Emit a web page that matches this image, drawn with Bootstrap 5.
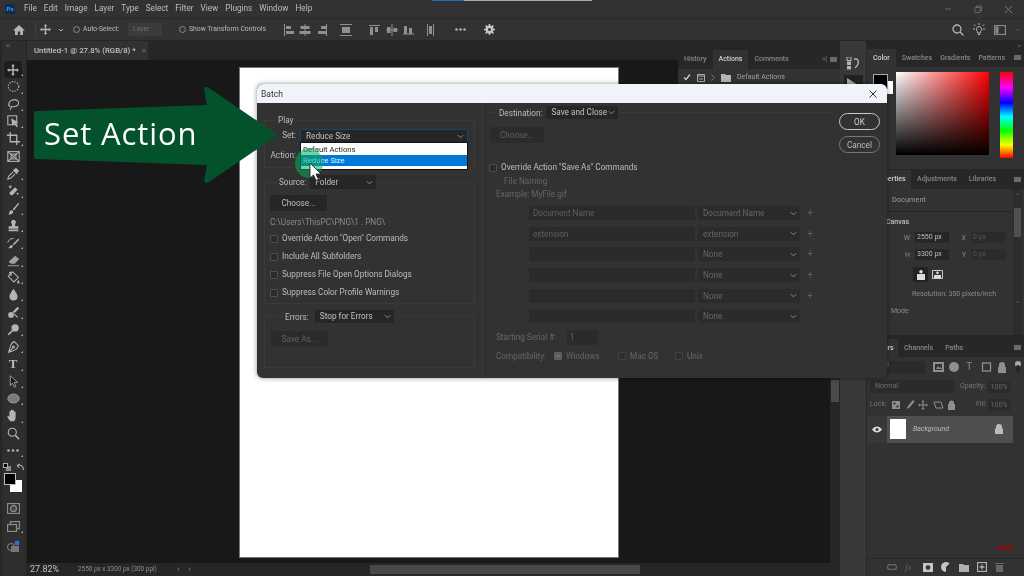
<!DOCTYPE html>
<html lang="en">
<head>
<meta charset="UTF-8">
<title>Batch - Photoshop</title>
<link href="https://cdn.jsdelivr.net/npm/bootstrap@5.3.0/dist/css/bootstrap.min.css" rel="stylesheet">
<style>
  html, body { margin: 0; background: #323232; overflow: hidden; }
  body { font-family: Roboto, "Liberation Sans", sans-serif; font-size: 8.2px; line-height: 1.2; color: #bcbcbc; white-space: nowrap; }
  svg { display: block; flex: none; }
  .ps-app { position: relative; width: 1024px; height: 576px; overflow: hidden; background: #323232; filter: blur(.35px); }
  .ico { fill: #b4b4b4; stroke: none; }
  .ico-line { fill: none; stroke: #b4b4b4; stroke-width: 1.3; }

  /* top bars */
  .menu-row { position: relative; height: 19px; padding-left: 5px; border-bottom: 1px solid #2a2a2a; }
  .load-bar { position: absolute; top: 0; left: 432px; width: 160px; height: 1px; background: linear-gradient(90deg, #1a6fc0 20%, #a8a8a8 20%); }
  .ps-logo { width: 10px; height: 10px; margin-right: 9px; background: #0f2c55; color: #3aa3f5; font: 700 6px/10px Roboto, sans-serif; text-align: center; }
  .menu-words { gap: 7px; }
  .menu-word { font-size: 8.2px; color: #bdbdbd; }
  .win-btns { margin-left: auto; gap: 22px; padding-right: 11px; }
  .option-row { height: 22px; border-bottom: 1px solid #262626; font-size: 6.8px; }
  .opt-sep { width: 1px; height: 16px; background: #3e3e3e; }
  .opt-check { width: 7px; height: 7px; border: 1px solid #8a8a8a; border-radius: 50%; }
  .opt-select { width: 34px; height: 13px; background: #3b3b3b; color: #6c6c6c; padding: 2px 5px; line-height: 9px; }

  /* work area */
  .work-row { height: 535px; }
  .tool-col { width: 27px; background: #2e2e2e; border-left: 2px solid #262626; border-right: 1px solid #242424; }
  .tool-head { height: 20px; color: #8a8a8a; font-size: 7px; padding: 1px 0 0 4px; }
  .tool-btn { position: relative; height: 17.32px; width: 18px; margin-left: 2px; }
  .tool-btn.is-on { background: #1d1d1d; border-radius: 2px; }
  .tool-btn.has-fly::after { content: ""; position: absolute; right: -1px; bottom: 2px; border-left: 2px solid transparent; border-bottom: 2px solid #b4b4b4; }
  .tool-t { font: 700 13px/1 "Liberation Serif", serif; color: #b8b8b8; }
  .swatch-box { position: relative; height: 39px; }
  .swatch-fg, .swatch-bg { position: absolute; width: 12px; height: 12px; }
  .swatch-fg { left: 2px; top: 14px; background: #000; border: 1px solid #bbb; z-index: 1; }
  .swatch-bg { left: 8px; top: 21px; background: #fff; }
  .swatch-mini-a, .swatch-mini-b { position: absolute; width: 5px; height: 5px; }
  .swatch-mini-a { left: 1px; top: 4px; background: #000; border: 1px solid #aaa; z-index: 1; }
  .swatch-mini-b { left: 4px; top: 7px; background: #888; }
  .swap-ico { position: absolute; left: 14px; top: 4px; }

  .doc-col { width: 813px; }
  .doc-tabs { height: 19px; background: #262626; }
  .doc-tab { width: 121px; background: #323232; padding-left: 7px; color: #c0c0c0; font-size: 7.8px; font-weight: 500; gap: 6px; }
  .doc-mid { height: 503px; }
  .doc-canvas { width: 803px; padding-top: 2px; background: #181818; }
  .doc-page { width: 378px; height: 489px; background: #fff; outline: 1px solid #777; }
  .doc-vbar { width: 10px; background: #262626; padding: 320px 1px 0; }
  .doc-vthumb { height: 22px; background: #4a4a4a; }
  .doc-status { height: 13px; background: #262626; padding-left: 3px; }
  .status-zoom { width: 48px; font-size: 9px; color: #c0c0c0; }
  .status-size { width: 99px; color: #8f8f8f; font-size: 6.4px; }
  .status-arrows { width: 193px; gap: 9px; color: #888; }
  .status-thumb { width: 270px; height: 9px; background: #484848; }

  .icon-strip { width: 27px; background: #383838; border-right: 1px solid #262626; }
  .dock-col { width: 157px; background: #262626; font-size: 7px; }
  .dock-head { height: 8px; color: #8a8a8a; font-size: 6px; text-align: right; padding-right: 3px; line-height: 7px; }
  .pane-tabs { height: 18px; background: #272727; font-size: 7px; }
  .pane-tab { padding: 0 6px; color: #868686; font-weight: 500; }
  .pane-tab.is-on { background: #323232; color: #d0d0d0; }
  .pane-menu { margin-left: auto; margin-right: 3px; width: 7px; height: 5px; background: #6a6a6a; }
  .pane-body { background: #323232; }

  .color-body { height: 103px; margin-bottom: 1px; padding: 5px 0 0 29px; }
  .color-swatch { position: relative; }
  .color-spec { width: 93px; height: 83px; background: linear-gradient(to top, #000, transparent), linear-gradient(to right, #fff, #f00); }
  .color-hue { width: 13px; height: 86px; margin-left: 11px; background: linear-gradient(180deg, #f00, #f0f 18%, #00f 36%, #0ff 52%, #0f0 68%, #ff0 85%, #f00); }
  .color-fg { position: absolute; width: 15px; height: 15px; left: -23px; top: 2px; background: #000; border: 1px solid #aaa; z-index: 1; }
  .color-bg { position: absolute; width: 13px; height: 13px; left: -16px; top: 9px; background: #fff; }

  .prop-body { height: 147px; padding-right: 2px; }
  .prop-sub { height: 23px; padding-top: 2px; border-bottom: 1px solid #262626; padding-left: 25px; color: #9a9a9a; font-size: 7.4px; }
  .prop-main { padding: 6px 0 0 19px; }
  .prop-title { color: #c0c0c0; font-weight: 500; margin-bottom: 6px; }
  .prop-grid { display: grid; grid-template-columns: 13px 34px 12px 35px; column-gap: 5px; row-gap: 6px; align-items: center; margin-left: 11px; color: #8a8a8a; }
  .prop-inp { height: 11px; background: #262626; color: #bcbcbc; padding-left: 2px; line-height: 11px; }
  .prop-inp.is-off { background: #2b2b2b; color: #555; }
  .prop-orient { margin: 7px 0 0 27px; gap: 4px; }
  .orient-btn { width: 15px; height: 15px; background: #222; }
  .prop-res { margin: 8px 0 0 26px; color: #8b8b8b; }
  .prop-mode { margin: 8px 0 0 5px; color: #8b8b8b; }
  .prop-scroll { width: 9px; background: #2c2c2c; color: #777; }
  .prop-thumb { height: 29px; background: #505050; margin: 8px 1px 0; }

  .layer-body { height: 221px; }
  .layer-line { height: 18px; padding: 0 3px; color: #767676; }
  .layer-sel { height: 13px; background: #2b2b2b; color: #6f6f6f; padding-left: 5px; }
  .layer-pct { width: 22px; height: 12px; background: #2b2b2b; color: #666; text-align: center; line-height: 12px; }
  .layer-item { height: 27px; margin-top: 2px; width: 146px; }
  .layer-eye { width: 20px; background: #383838; }
  .layer-cell { background: #4f4f4f; padding-left: 3px; gap: 7px; color: #bcbcbc; font-style: italic; }
  .layer-thumb { width: 16px; height: 20px; background: #fff; }
  .layer-foot { height: 18px; margin-top: auto; border-top: 1px solid #262626; gap: 8px; padding-left: 20px; }

  /* floating actions panel */
  .float-pane { position: absolute; left: 678px; top: 50px; width: 162px; height: 150px; background: #323232; z-index: 1; }
  .float-row { height: 17px; gap: 6px; padding-left: 5px; color: #a0a0a0; font-size: 7px; }
  .strip-play { width: 19px; height: 18px; background: #222; margin: 5px auto 0; padding: 3px 0 0 3px; }

  /* batch dialog */
  .batch-dlg { position: absolute; left: 257px; top: 84px; width: 630px; height: 294px; border-radius: 6px; overflow: hidden; background: #323232; z-index: 3; box-shadow: 0 0 5px rgba(0,0,0,.45); }
  .batch-title { height: 19px; background: #f0f4fa; color: #333; padding: 1px 10px 0 4px; font-size: 8.5px; }
  .batch-close { margin-left: auto; }
  .batch-left { position: relative; width: 226px; border-right: 1px solid #3a3a3a; padding: 11px 7px 0; }
  .batch-right { width: 352px; padding: 3px 5px 0 5px; }
  .batch-btns { padding: 10px 0 0 4px; gap: 6px; width: 46px; }
  .ps-group { border: 1px solid #3a3a3a; }
  .ps-group legend { float: none; width: auto; margin: 0; padding: 0 2px; font-size: 8.2px; line-height: 12px; }
  .group-play { height: 54px; padding-top: 4px; }
  .group-play legend { margin-left: 11px; }
  .group-src { height: 129px; margin-top: 7px; padding: 6px 0 0 5px; }
  .group-src legend { margin-left: 7px; }
  .group-err { height: 58px; margin-top: 6px; padding: 8px 0 0 6px; }
  .group-err legend { margin-left: 12px; gap: 6px; }
  .group-dest { height: 55px; border-width: 1px 0 0; padding: 8px 0 0 2px; }
  .group-dest legend { margin-left: 7px; }
  .ps-field { gap: 5px; height: 12px; }
  .ps-label { width: 32px; text-align: right; }
  .ps-select.form-select { width: auto; height: 13px; min-height: 0; padding: 0 14px 0 5px; font-size: 8.2px; line-height: 13px; color: #c0c0c0; background-color: #262626; border: 0; border-radius: 1px; box-shadow: none; background-size: 7px; background-position: right 3px center; background-image: url("data:image/svg+xml,%3csvg xmlns='http://www.w3.org/2000/svg' viewBox='0 0 16 16'%3e%3cpath fill='none' stroke='%23999' stroke-width='2' d='M2 5l6 6 6-6'/%3e%3c/svg%3e"); font-family: inherit; }
  .group-dest .ps-select.form-select { padding-right: 9px; }
  .set-wrap { position: relative; width: 166px; }
  .set-wrap .form-select { width: 100%; height: 12px; outline: 1px solid #16486f; }
  .set-list { position: absolute; top: 13px; left: 0; width: 100%; height: 26px; background: #fff; z-index: 2; box-shadow: 0 0 0 1px #111; color: #222; font-size: 7.7px; }
  .set-item { height: 12px; line-height: 14px; padding-left: 2px; }
  .set-item.is-on { background: #0078d7; color: #dff; height: 11px; line-height: 12px; }
  .set-glow { position: absolute; left: -6px; top: 18px; width: 28px; height: 30px; border-radius: 50%; background: rgba(10,170,90,.55); z-index: 3; }
  .set-cursor { position: absolute; left: 8px; top: 33px; z-index: 4; }
  .ps-btn.btn { height: 16px; width: 57px; padding: 0; font-size: 8.2px; line-height: 16px; background: #262626; color: #bcbcbc; border: 0; border-radius: 1px; }
  .ps-btn.btn:disabled { background: #2b2b2b; color: #606060; opacity: 1; }
  .ps-path { color: #8a8a8a; margin: 6px 0 2px; line-height: 11px; height: 11px; }
  .ps-check { height: 18px; gap: 4px; }
  .ps-check .form-check-input { width: 8px; height: 8px; margin: 0; background-color: #2b2b2b; border: 1px solid #505050; border-radius: 1px; flex: none; }
  .ps-check .form-check-input:checked { background-color: #8a8a8a; border-color: #8a8a8a; }
  .ok-btn.btn { height: 17px; width: 41px; padding: 0; font-size: 8.2px; line-height: 14px; color: #d0d0d0; background: transparent; border: 1px solid #c8c8c8; border-radius: 9px; }
  .cancel-btn.btn { border-color: #777; color: #bcbcbc; }
  .off-text { color: #666; }
  .name-grid { display: grid; grid-template-columns: 166px 102px 14px; column-gap: 3px; row-gap: 6.7px; margin: 4px 0 0 41px; }
  .name-inp { height: 14px; background: #2b2b2b; color: #5f5f5f; padding-left: 4px; line-height: 14px; }
  .name-grid .form-select { width: 100%; height: 14px; background-color: #2b2b2b; color: #666; line-height: 14px; }
  .name-plus { color: #5e5e5e; font-size: 10px; line-height: 14px; text-align: center; }
  .serial-box { width: 31px; height: 15px; background: #2b2b2b; color: #5f5f5f; padding-left: 3px; line-height: 15px; }

  /* green callout */
  .call-arrow { position: absolute; left: 33px; top: 85px; z-index: 5; }
  .call-text { position: absolute; left: 44px; top: 113px; z-index: 6; color: #fff; font: 400 31px/40px "Open Sans", sans-serif; letter-spacing: .9px; }
</style>
</head>
<body>
<div class="ps-app d-flex flex-column">

  <div class="menu-row d-flex align-items-center">
    <div class="load-bar"></div>
    <div class="ps-logo">Ps</div>
    <div class="menu-words d-flex">
      <span class="menu-word">File</span><span class="menu-word">Edit</span><span class="menu-word">Image</span><span class="menu-word">Layer</span><span class="menu-word">Type</span><span class="menu-word">Select</span><span class="menu-word">Filter</span><span class="menu-word">View</span><span class="menu-word">Plugins</span><span class="menu-word">Window</span><span class="menu-word">Help</span>
    </div>
    <div class="win-btns d-flex align-items-center">
      <svg width="8" height="8" viewBox="0 0 8 8"><path d="M1 4h6" stroke="#666" fill="none"/></svg>
      <svg width="8" height="8" viewBox="0 0 8 8"><path d="M1 2.500h5v5H1zM2.500 2.500V1h5v5H6" stroke="#666" fill="none"/></svg>
      <svg width="9" height="9" viewBox="0 0 9 9"><path d="M1 1l7 7M8 1l-7 7" stroke="#777" fill="none"/></svg>
    </div>
  </div>

  <div class="option-row d-flex align-items-center">
    <svg class="ico" style="margin-left:13px" width="12" height="12" viewBox="0 0 12 12"><path d="M6 1l6 5.500h-2V11H7.200V7.500H4.800V11H2V6.500H0z"/></svg>
    <div class="opt-sep" style="margin-left:10px"></div>
    <svg class="ico" style="margin-left:4px" width="11" height="11" viewBox="0 0 16 16"><path d="M8 0l2.500 3H9v4h4V5.500L16 8l-3 2.500V9H9v4h1.500L8 16l-2.500-3H7V9H3v1.500L0 8l3-2.500V7h4V3H5.500z"/></svg>
    <svg class="ico-line" style="margin-left:7px" width="6" height="6" viewBox="0 0 6 6"><path d="M1 2l2 2 2-2" stroke-width="1"/></svg>
    <div class="opt-check" style="margin-left:9px"></div>
    <span style="margin-left:3px;width:45px">Auto-Select:</span>
    <div class="opt-select" style="margin-right:17px">Layer</div>
    <div class="opt-check"></div>
    <span style="margin-left:3px;width:85px">Show Transform Controls</span>
    <svg class="ico" style="margin-left:10px;fill:#909090" width="150" height="12" viewBox="0 0 150 12">
      <path d="M0 0h1v12H0zM2 2h5v3H2zM2 7h8v3H2z"/>
      <path d="M20.500 0h1v2h4v3h-4v2h5v3h-5v2h-1v-2h-5V7h5V5h-4V2h4z"/>
      <path d="M37 2h5v3h-5zM34 7h8v3h-8zM42 0h1v12h-1z"/>
      <path d="M56 0h12v1H56zM56 11h12v1H56zM58 3h8v6h-8z"/>
      <path d="M85 1h11v1H85zM86 3h3v8h-3zM91 3h3v5h-3z"/>
      <path d="M107.500 0h1v12h-1zM103 3h3.500v6H103zM109.500 4h3.500v4h-3.500zM102 5.500h12v1h-12z"/>
      <path d="M119 9.500h11v1h-11zM120 2h3v8h-3zM125 4h3v6h-3z"/>
      <path d="M143 0h1v12h-1zM149 0h1v12h-1zM145 2h3v8h-3z"/>
    </svg>
    <svg class="ico" style="margin-left:21px" width="11" height="3" viewBox="0 0 11 3"><circle cx="1.500" cy="1.500" r="1.300"/><circle cx="5.500" cy="1.500" r="1.300"/><circle cx="9.500" cy="1.500" r="1.300"/></svg>
    <svg style="margin-left:18px" width="11" height="11" viewBox="0 0 16 16"><circle cx="8" cy="8" r="4" fill="none" stroke="#c8c8c8" stroke-width="3.500"/><path d="M8 0v3M8 13v3M0 8h3M13 8h3M2.300 2.300l2 2M11.700 11.700l2 2M2.300 13.700l2-2M11.700 4.300l2-2" stroke="#c8c8c8" stroke-width="2.200"/></svg>
    <div class="d-flex align-items-center ms-auto" style="gap:9px;padding-right:3px">
      <svg class="ico-line" width="12" height="12" viewBox="0 0 12 12"><circle cx="5" cy="5" r="4"/><path d="M8 8l3.500 3.500"/></svg>
      <svg class="ico-line" width="12" height="13" viewBox="0 0 12 13"><path d="M6 3.500a2.800 2.800 0 0 1 1.500 5v1.500h-3V8.500A2.800 2.800 0 0 1 6 3.500zM4.800 11.500h2.400M6 0v2M1 1.500l1.500 1.500M11 1.500L9.500 3M0 6h2M10 6h2" stroke-width="1"/></svg>
      <svg class="ico-line" width="12" height="10" viewBox="0 0 12 10"><rect x=".5" y=".5" width="11" height="9" stroke="#888"/><rect x="1.500" y="1.500" width="3" height="7" fill="#888" stroke="none"/></svg>
      <svg class="ico-line" width="6" height="6" viewBox="0 0 6 6"><path d="M1 2l2 2 2-2" stroke="#555" stroke-width="1"/></svg>
    </div>
  </div>

  <div class="work-row d-flex">
    <div class="tool-col">
      <div class="tool-head">‹‹</div>
      <div class="tool-btn is-on has-fly d-flex align-items-center justify-content-center"><svg class="ico" width="12" height="12" viewBox="0 0 16 16"><path d="M8 0l2.500 3H9v4h4V5.500L16 8l-3 2.500V9H9v4h1.500L8 16l-2.500-3H7V9H3v1.500L0 8l3-2.500V7h4V3H5.500z"/></svg></div>
      <div class="tool-btn has-fly d-flex align-items-center justify-content-center"><svg class="ico-line" width="13" height="13" viewBox="0 0 16 16"><ellipse cx="8" cy="8" rx="6.500" ry="6" stroke-dasharray="1.800 1.500"/></svg></div>
      <div class="tool-btn has-fly d-flex align-items-center justify-content-center"><svg class="ico-line" width="13" height="13" viewBox="0 0 16 16"><path d="M3.500 11C0 7 4 2 9 2s6.500 4 4.500 6.500S7 11 4.500 10.500M5 10c1 2 0 3-1.500 4.500"/></svg></div>
      <div class="tool-btn has-fly d-flex align-items-center justify-content-center"><svg class="ico-line" width="13" height="13" viewBox="0 0 16 16"><rect x="1" y="1" width="11" height="11"/><path class="ico" d="M5 4l9 5-3.500 1 3 4-1.500 1-3-4L6.500 13z" stroke="none"/></svg></div>
      <div class="tool-btn has-fly d-flex align-items-center justify-content-center"><svg class="ico-line" width="13" height="13" viewBox="0 0 16 16"><path d="M4 0v12h12M0 4h12v12" stroke-width="1.600"/></svg></div>
      <div class="tool-btn d-flex align-items-center justify-content-center"><svg class="ico-line" width="13" height="13" viewBox="0 0 16 16"><rect x="1" y="2" width="14" height="12"/><path d="M1 2l14 12M15 2L1 14"/><rect x="5" y="5" width="6" height="6"/></svg></div>
      <div class="tool-btn has-fly d-flex align-items-center justify-content-center"><svg class="ico" width="13" height="13" viewBox="0 0 16 16"><path d="M11 1l4 4-2.500 2.500L13 8l-1 1-5-5 1-1 .5.500z"/><path d="M7.500 6L2 11.500 1 15l3.500-1L10 8.500" fill="none" stroke="#b4b4b4" stroke-width="1.300"/></svg></div>
      <div class="tool-btn has-fly d-flex align-items-center justify-content-center"><svg class="ico" width="13" height="13" viewBox="0 0 16 16"><path d="M10 4l3 3-6 6.500c-1.500 1.500-5-2-3.500-3.500z"/><path d="M4 1l.8 1.700L6.500 3.500 4.800 4.300 4 6l-.8-1.700L1.500 3.500l1.700-.8zM13 10l.6 1.400 1.400.6-1.400.6L13 14l-.6-1.400L11 12l1.400-.6z"/></svg></div>
      <div class="tool-btn has-fly d-flex align-items-center justify-content-center"><svg class="ico" width="13" height="13" viewBox="0 0 16 16"><path d="M14 1L7 9l1.500 1.500L15 2z"/><path d="M6 10c-2 0-3 1-3 2.500S2 15 1 15c3 1 7 0 6.500-3.500z"/></svg></div>
      <div class="tool-btn has-fly d-flex align-items-center justify-content-center"><svg class="ico" width="13" height="13" viewBox="0 0 16 16"><path d="M8 1a3 3 0 0 1 2 5.200V9h4v3H2V9h4V6.200A3 3 0 0 1 8 1zM2 13h12v2H2z"/></svg></div>
      <div class="tool-btn has-fly d-flex align-items-center justify-content-center"><svg class="ico" width="13" height="13" viewBox="0 0 16 16"><path d="M14 3L7 10l1.500 1.500L15 4.500zM6 11c-2 0-2 1-2.500 2S2 14.500 1 14.500C4 16 7.500 15 7 12z"/><path d="M1 8c1-3 3-5 7-5" fill="none" stroke="#b4b4b4" stroke-width="1.200"/></svg></div>
      <div class="tool-btn has-fly d-flex align-items-center justify-content-center"><svg class="ico" width="13" height="13" viewBox="0 0 16 16"><path d="M10 2l5 4-5.500 6H5L2 9.500z" opacity=".85"/><path d="M1 14h14v1H1z"/></svg></div>
      <div class="tool-btn has-fly d-flex align-items-center justify-content-center"><svg class="ico-line" width="13" height="13" viewBox="0 0 16 16"><path d="M7 1l7 7-5.500 5.500-7-7zM3 3c0-2 2-2 2-1v4"/><path class="ico" d="M14 11c1 1.500 1.500 2.300 1.500 3a1.500 1.500 0 0 1-3 0c0-.7.500-1.500 1.500-3z" stroke="none"/></svg></div>
      <div class="tool-btn has-fly d-flex align-items-center justify-content-center"><svg class="ico" width="13" height="13" viewBox="0 0 16 16"><path d="M8 1c3 4.500 5 7 5 9.500a5 5 0 0 1-10 0C3 8 5 5.500 8 1z"/></svg></div>
      <div class="tool-btn has-fly d-flex align-items-center justify-content-center"><svg class="ico" width="13" height="13" viewBox="0 0 16 16"><path d="M13 1l2 2-6 6-2-2z"/><circle cx="5" cy="11" r="3.500"/><path d="M9 10l4 4" stroke="#b4b4b4" stroke-width="1.500"/></svg></div>
      <div class="tool-btn has-fly d-flex align-items-center justify-content-center"><svg class="ico" width="13" height="13" viewBox="0 0 16 16"><circle cx="10" cy="6" r="4.500"/><path d="M7 9L1.500 14.500" stroke="#b4b4b4" stroke-width="2"/></svg></div>
      <div class="tool-btn has-fly d-flex align-items-center justify-content-center"><svg class="ico-line" width="13" height="13" viewBox="0 0 16 16"><path d="M9 2l5 5c-1 3-3 5.500-7 6.500L2 15l1.500-5C4.500 6 6 3 9 2zM2 15l5-5"/><circle cx="8" cy="8.500" r="1.200"/></svg></div>
      <div class="tool-btn has-fly d-flex align-items-center justify-content-center"><span class="tool-t">T</span></div>
      <div class="tool-btn has-fly d-flex align-items-center justify-content-center"><svg width="13" height="13" viewBox="0 0 16 16"><path d="M4 1l9 8H8.500l2.500 5-2 1-2.500-5L4 13z" fill="#151515" stroke="#b4b4b4"/></svg></div>
      <div class="tool-btn has-fly d-flex align-items-center justify-content-center"><svg width="13" height="13" viewBox="0 0 16 16"><ellipse cx="8" cy="8" rx="7" ry="5.500" fill="#7a7a7a" stroke="#a8a8a8"/></svg></div>
      <div class="tool-btn has-fly d-flex align-items-center justify-content-center"><svg class="ico" width="13" height="13" viewBox="0 0 16 16"><path d="M4 15c-2-2-3.500-5-3.500-6s1.500-1 2.500 1V3c0-1.300 1.800-1.300 1.800 0v3V1.700c0-1.300 2-1.300 2 0V6V2.300c0-1.300 2-1.300 2 0V7V4c0-1.200 1.800-1.200 1.800 0v6c0 2.500-1 4-2 5z"/></svg></div>
      <div class="tool-btn d-flex align-items-center justify-content-center"><svg class="ico-line" width="13" height="13" viewBox="0 0 16 16"><circle cx="6.500" cy="6.500" r="5"/><path d="M10 10l5 5" stroke-width="1.800"/></svg></div>
      <div class="tool-btn has-fly d-flex align-items-center justify-content-center"><svg class="ico" width="12" height="3" viewBox="0 0 12 3"><circle cx="1.500" cy="1.500" r="1.300"/><circle cx="6" cy="1.500" r="1.300"/><circle cx="10.500" cy="1.500" r="1.300"/></svg></div>
      <div class="swatch-box">
        <div class="swatch-mini-a"></div><div class="swatch-mini-b"></div>
        <svg class="swap-ico ico-line" width="9" height="8" viewBox="0 0 9 8"><path d="M1 3c3-2 6-1 6.500 4M1 3l2.500-2M1 3l2.500 1.500" stroke-width="1.100"/></svg>
        <div class="swatch-fg"></div><div class="swatch-bg"></div>
      </div>
      <div class="tool-btn d-flex align-items-center justify-content-center" style="margin-top:2px"><svg class="ico-line" width="13" height="11" viewBox="0 0 13 11"><rect x=".5" y=".5" width="12" height="10" stroke="#8a8a8a"/><circle cx="6.500" cy="5.500" r="3" stroke="#8a8a8a" fill="#444"/></svg></div>
      <div class="tool-btn has-fly d-flex align-items-center justify-content-center"><svg class="ico-line" width="13" height="11" viewBox="0 0 13 11"><rect x="3.500" y=".5" width="9" height="7" stroke="#8a8a8a"/><rect x=".5" y="3.500" width="9" height="7" fill="#2e2e2e" stroke="#8a8a8a"/></svg></div>
      <div class="tool-btn d-flex align-items-center justify-content-center" style="margin-top:3px"><svg width="15" height="13" viewBox="0 0 15 13"><circle cx="5" cy="7" r="3.500" fill="none" stroke="#888"/><rect x="5" y="6" width="8" height="6" fill="#777"/><circle cx="11" cy="3" r="2.500" fill="#2a6fd0"/></svg></div>
    </div>

    <div class="doc-col d-flex flex-column">
      <div class="doc-tabs d-flex">
        <div class="doc-tab d-flex align-items-center"><span>Untitled-1 @ 27.8% (RGB/8) *</span><span class="off-text">×</span></div>
      </div>
      <div class="doc-mid d-flex">
        <div class="doc-canvas d-flex align-items-center justify-content-center"><div class="doc-page"></div></div>
        <div class="doc-vbar"><div class="doc-vthumb"></div></div>
      </div>
      <div class="doc-status d-flex align-items-center">
        <span class="status-zoom">27.82%</span>
        <span class="status-size">2550 px x 3300 px (300 ppi)</span>
        <span class="status-arrows d-flex"><span>›</span><span>‹</span></span>
        <div class="status-thumb"></div>
      </div>
    </div>

    <div class="icon-strip">
      <svg class="mx-auto" style="margin-top:16px" width="14" height="13" viewBox="0 0 14 13"><rect x="1" y="0" width="4" height="3.500" fill="none" stroke="#b4b4b4"/><rect x="1" y="4.500" width="4" height="3.500" fill="#b4b4b4"/><rect x="1" y="9" width="4" height="3.500" fill="#b4b4b4"/><path d="M8 2h3c2 2 2 6-2 9" fill="none" stroke="#b4b4b4" stroke-width="1.300"/></svg>
      <div class="strip-play"><svg width="11" height="15" viewBox="0 0 11 15"><path d="M0 0l11 7-11 8z" fill="#a8a8a8"/></svg></div>
    </div>

    <div class="dock-col d-flex flex-column">
      <div class="dock-head">››</div>
      <div class="pane-tabs d-flex align-items-stretch">
        <div class="pane-tab is-on d-flex align-items-center">Color</div><div class="pane-tab d-flex align-items-center" style="padding:0 4px 0 6px">Swatches</div><div class="pane-tab d-flex align-items-center" style="padding:0 4px">Gradients</div><div class="pane-tab d-flex align-items-center" style="padding:0 4px">Patterns</div>
        <div class="pane-menu align-self-center"></div>
      </div>
      <div class="pane-body color-body d-flex">
        <div class="color-swatch"><div class="color-fg"></div><div class="color-bg"></div></div>
        <div class="color-spec"></div>
        <div class="color-hue"></div>
      </div>

      <div class="pane-tabs d-flex align-items-stretch" style="height:19px">
        <div class="pane-tab is-on d-flex align-items-center" style="width:44px">Properties</div><div class="pane-tab d-flex align-items-center">Adjustments</div><div class="pane-tab d-flex align-items-center">Libraries</div>
        <div class="pane-menu align-self-center"></div>
      </div>
      <div class="pane-body prop-body d-flex">
        <div class="flex-grow-1">
          <div class="prop-sub d-flex align-items-center">Document</div>
          <div class="prop-main">
            <div class="prop-title">Canvas</div>
            <div class="prop-grid">
              <span class="text-end">W</span><div class="prop-inp">2550 px</div><span class="text-end">X</span><div class="prop-inp is-off">0 px</div>
              <span class="text-end">H</span><div class="prop-inp">3300 px</div><span class="text-end">Y</span><div class="prop-inp is-off">0 px</div>
            </div>
            <div class="prop-orient d-flex align-items-center">
              <div class="orient-btn d-flex align-items-center justify-content-center"><svg width="8" height="10" viewBox="0 0 8 10"><circle cx="4" cy="1.800" r="1.800" fill="#ddd"/><path d="M0 4h8v6H0z" fill="#ddd"/></svg></div>
              <svg width="11" height="9" viewBox="0 0 11 9"><path d="M.5.5h10v8H.5z" fill="#333" stroke="#ccc"/><circle cx="5.500" cy="2.800" r="1.300" fill="#ddd"/><path d="M2 5h7v3H2z" fill="#ddd"/></svg>
            </div>
            <div class="prop-res">Resolution: 300 pixels/inch</div>
            <div class="prop-mode">Mode</div>
          </div>
        </div>
        <div class="prop-scroll">
          <div class="text-center" style="font-size:6px;line-height:8px;margin-top:3px">⌃</div>
          <div class="prop-thumb"></div>
          <div class="text-center" style="font-size:6px;line-height:8px;margin-top:60px">⌄</div>
        </div>
      </div>

      <div style="height:4px"></div>
      <div class="pane-tabs d-flex align-items-stretch">
        <div class="pane-tab is-on d-flex align-items-center" style="width:31px">Layers</div><div class="pane-tab d-flex align-items-center">Channels</div><div class="pane-tab d-flex align-items-center">Paths</div>
        <div class="pane-menu align-self-center"></div>
      </div>
      <div class="pane-body layer-body d-flex flex-column">
        <div class="layer-line d-flex align-items-center" style="height:21px">
          <div class="layer-sel" style="width:56px">Kind</div>
          <svg class="ico" style="margin-left:8px;fill:#8f8f8f" width="11" height="10" viewBox="0 0 11 10"><path d="M0 0h11v10H0zM2 2v6h7V2zM3 7l2-3 1.500 2 1-1L9 7z" fill-rule="evenodd"/></svg>
          <svg class="ico" style="margin-left:5px;fill:#8f8f8f" width="10" height="10" viewBox="0 0 10 10"><circle cx="5" cy="5" r="5"/></svg>
          <span style="margin-left:7px;font-size:10px;color:#8f8f8f;width:10px">T</span>
          <svg class="ico-line" style="margin-left:5px;stroke:#8f8f8f" width="11" height="10" viewBox="0 0 11 10"><rect x="1.500" y="1" width="8" height="8"/></svg>
          <svg class="ico" style="margin-left:5px;fill:#8f8f8f" width="10" height="11" viewBox="0 0 10 11"><path d="M2 5V3a3 3 0 0 1 6 0v2h1v6H1V5z"/></svg>
          <svg style="margin-left:8px" width="6" height="12" viewBox="0 0 6 12"><circle cx="3" cy="3" r="3" fill="#a8a8a8"/><rect x="1" y="4" width="4" height="8" rx="2" fill="#262626"/></svg>
        </div>
        <div class="layer-line d-flex align-items-center">
          <div class="layer-sel d-flex align-items-center" style="width:84px">Normal</div>
          <span style="margin-left:6px;width:28px">Opacity:</span>
          <div class="layer-pct">100%</div>
        </div>
        <div class="layer-line d-flex align-items-center">
          <span style="width:22px">Lock:</span>
          <svg width="68" height="10" viewBox="0 0 68 10" fill="#8f8f8f"><path d="M0 1h8v8H0zM1.500 2.500v2h2v-2zM4.500 5.500v2h2v-2z" fill-rule="evenodd"/><path d="M21 0l-5 6-1.500 3 3-1.500 5-6z"/><path d="M31 0l1.500 2H31.500v2.500H34V3.500L36 5l-2 1.500v-1H31.500V8h1L31 10l-1.500-2h1V5.500H28v1L26 5l2-1.500v1h2.500V2h-1z"/><path d="M42 2h7l2 6h-7z" fill="none" stroke="#8f8f8f"/><path d="M57 4V3a2.500 2.500 0 0 1 5 0v1h1v6h-7V4z"/></svg>
          <span class="ms-auto" style="width:12px">Fill:</span>
          <div class="layer-pct" style="margin-right:11px">100%</div>
        </div>
        <div class="layer-item d-flex">
          <div class="layer-eye d-flex align-items-center justify-content-center"><svg width="10" height="7" viewBox="0 0 10 7"><path d="M0 3.500C3-.5 7-.5 10 3.500 7 7.500 3 7.500 0 3.500z" fill="#ddd"/><circle cx="5" cy="3.500" r="1.500" fill="#333"/></svg></div>
          <div class="layer-cell flex-grow-1 d-flex align-items-center">
            <div class="layer-thumb"></div><span>Background</span>
            <svg class="ms-auto" style="margin-right:10px" width="8" height="10" viewBox="0 0 8 10"><path d="M1 4.500V3a3 3 0 0 1 6 0v1.500h1V10H0V4.500z" fill="#bbb"/></svg>
          </div>
        </div>
        <div class="layer-foot d-flex align-items-center mt-auto">
          <svg class="ico-line" style="stroke:#666" width="10" height="6" viewBox="0 0 10 6"><rect x=".5" y=".5" width="9" height="5" rx="2.500"/></svg>
          <span style="font:italic 9px 'Liberation Serif',serif;color:#666;width:10px">fx</span>
          <svg width="10" height="9" viewBox="0 0 10 9"><path d="M0 0h10v9H0z" fill="#c4c4c4"/><circle cx="5" cy="4.500" r="2.300" fill="#323232"/></svg>
          <svg width="10" height="10" viewBox="0 0 10 10"><circle cx="5" cy="5" r="5" fill="#c4c4c4"/><path d="M5 5L9 1A5 5 0 0 1 5 10z" fill="#323232"/></svg>
          <svg width="10" height="9" viewBox="0 0 10 9"><path d="M0 1h4l1 1h5v7H0z" fill="#b0b0b0"/></svg>
          <svg class="ico-line" style="stroke:#b0b0b0" width="10" height="10" viewBox="0 0 10 10"><rect x=".5" y=".5" width="9" height="9"/><path d="M5 2.500v5M2.500 5h5"/></svg>
          <svg width="9" height="10" viewBox="0 0 9 10"><path d="M0 1h9v1H0zM1 3h7v7H1z" fill="#666"/></svg>
        </div>
      </div>
    </div>
  </div>

  <!-- floating actions panel, mostly behind the dialog -->
  <div class="float-pane">
    <div class="pane-tabs d-flex align-items-stretch" style="height:19px">
      <div class="pane-tab d-flex align-items-center">History</div><div class="pane-tab is-on d-flex align-items-center">Actions</div><div class="pane-tab d-flex align-items-center">Comments</div>
      <span class="ms-auto d-flex align-items-center" style="color:#777;padding-right:3px;gap:3px">»|<span class="pane-menu" style="margin:0"></span></span>
    </div>
    <div class="float-row d-flex align-items-center">
      <svg width="8" height="7" viewBox="0 0 8 7"><path d="M1 3.500l2 2 4-5" fill="none" stroke="#ccc" stroke-width="1.400"/></svg>
      <svg width="8" height="8" viewBox="0 0 8 8"><path d="M.5.5h7v7h-7zM.5 2h7M2 5h4" fill="none" stroke="#aaa"/></svg>
      <svg width="4" height="7" viewBox="0 0 4 7"><path d="M.5.5l3 3-3 3" fill="none" stroke="#777"/></svg>
      <svg width="10" height="8" viewBox="0 0 10 8"><path d="M0 0h4l1 1h5v7H0z" fill="#b4b4b4"/></svg>
      <span>Default Actions</span>
    </div>
  </div>

  <!-- batch dialog -->
  <div class="batch-dlg">
    <div class="batch-title d-flex align-items-center">
      <span>Batch</span>
      <svg class="batch-close" width="8" height="8" viewBox="0 0 8 8"><path d="M.5.5l7 7M7.500.5l-7 7" stroke="#333" fill="none"/></svg>
    </div>
    <div class="d-flex" style="height:275px">
      <div class="batch-left">
        <fieldset class="ps-group group-play">
          <legend>Play</legend>
          <div class="ps-field d-flex align-items-center">
            <label class="ps-label" style="width:31px">Set:</label>
            <div class="set-wrap">
              <select class="form-select ps-select"><option>Reduce Size</option></select>
              <div class="set-list">
                <div class="set-item">Default Actions</div>
                <div class="set-item is-on">Reduce Size</div>
              </div>
              <div class="set-glow"></div>
              <svg class="set-cursor" width="13" height="18" viewBox="0 0 13 18"><path d="M1 0v15l3.500-3 2.500 5.500 2.500-1L7 11h5z" fill="#fff" stroke="#111" stroke-width=".8"/></svg>
            </div>
          </div>
          <div class="ps-field d-flex align-items-center" style="margin-top:8px">
            <label class="ps-label" style="width:31px">Action:</label>
          </div>
        </fieldset>

        <fieldset class="ps-group group-src">
          <legend class="d-flex align-items-center" style="gap:4px">
            <span>Source:</span>
            <select class="form-select ps-select" style="width:66px;height:14px"><option>Folder</option></select>
          </legend>
          <button class="btn ps-btn" type="button">Choose...</button>
          <div class="ps-path">C:\Users\ThisPC\PNG\1 . PNG\</div>
          <div class="ps-check d-flex align-items-center"><input class="form-check-input" type="checkbox"><span>Override Action "Open" Commands</span></div>
          <div class="ps-check d-flex align-items-center"><input class="form-check-input" type="checkbox"><span>Include All Subfolders</span></div>
          <div class="ps-check d-flex align-items-center"><input class="form-check-input" type="checkbox"><span>Suppress File Open Options Dialogs</span></div>
          <div class="ps-check d-flex align-items-center"><input class="form-check-input" type="checkbox"><span>Suppress Color Profile Warnings</span></div>
        </fieldset>

        <fieldset class="ps-group group-err">
          <legend class="d-flex align-items-center">
            <span>Errors:</span>
            <select class="form-select ps-select" style="width:79px"><option>Stop for Errors</option></select>
          </legend>
          <button class="btn ps-btn" type="button" disabled>Save As...</button>
        </fieldset>
      </div>

      <div class="batch-right">
        <fieldset class="ps-group group-dest">
          <legend class="d-flex align-items-center" style="gap:4px">
            <span>Destination:</span>
            <select class="form-select ps-select" style="width:72px"><option>Save and Close</option></select>
          </legend>
          <button class="btn ps-btn" type="button" disabled style="width:54px">Choose...</button>
        </fieldset>
        <div class="ps-check d-flex align-items-center" style="height:14px;margin-left:1px"><input class="form-check-input" type="checkbox"><span>Override Action "Save As" Commands</span></div>
        <div class="off-text">
          <div style="margin-left:16px;height:13px;line-height:13px">File Naming</div>
          <div style="margin-left:8px;height:14px;line-height:13px">Example: MyFile.gif</div>
          <div class="name-grid">
            <div class="name-inp">Document Name</div><select class="form-select ps-select"><option>Document Name</option></select><div class="name-plus">+</div>
            <div class="name-inp">extension</div><select class="form-select ps-select"><option>extension</option></select><div class="name-plus">+</div>
            <div class="name-inp"></div><select class="form-select ps-select"><option>None</option></select><div class="name-plus">+</div>
            <div class="name-inp"></div><select class="form-select ps-select"><option>None</option></select><div class="name-plus">+</div>
            <div class="name-inp"></div><select class="form-select ps-select"><option>None</option></select><div class="name-plus">+</div>
            <div class="name-inp"></div><select class="form-select ps-select"><option>None</option></select><div class="name-plus"></div>
          </div>
          <div class="d-flex align-items-center" style="margin:7px 0 0 8px;height:15px"><span style="width:71px">Starting Serial #:</span><div class="serial-box">1</div></div>
          <div class="d-flex align-items-center" style="margin:4px 0 0 8px;height:14px">
            <span style="width:58px">Compatibility:</span>
            <div class="ps-check d-flex align-items-center" style="width:64px"><input class="form-check-input" type="checkbox" checked disabled><span>Windows</span></div>
            <div class="ps-check d-flex align-items-center" style="width:57px"><input class="form-check-input" type="checkbox" disabled><span>Mac OS</span></div>
            <div class="ps-check d-flex align-items-center"><input class="form-check-input" type="checkbox" disabled><span>Unix</span></div>
          </div>
        </div>
      </div>

      <div class="batch-btns d-flex flex-column">
        <button class="btn ok-btn" type="button">OK</button>
        <button class="btn ok-btn cancel-btn" type="button">Cancel</button>
      </div>
    </div>
  </div>

  <!-- green tutorial callout on top of everything -->
  <svg class="call-arrow" width="247" height="100" viewBox="0 0 247 100"><path d="M3 26L174 20 171 4Q172 0 176 3L245 50 176 97Q172 100 171 95L174 80 3 74Q1 74 1 72V28Q1 26 3 26z" fill="#03522c"/></svg>
  <div class="call-text">Set Action</div>
  <svg class="position-absolute" style="left:996px;top:544px;z-index:1" width="17" height="8" viewBox="0 0 17 8"><path d="M0 4C3 1 8 0 12 3L17 0v8l-5-3C8 8 3 7 0 4z" fill="#7a1518"/></svg>
</div>
<script src="https://cdn.jsdelivr.net/npm/bootstrap@5.3.0/dist/js/bootstrap.bundle.min.js"></script>
</body>
</html>
